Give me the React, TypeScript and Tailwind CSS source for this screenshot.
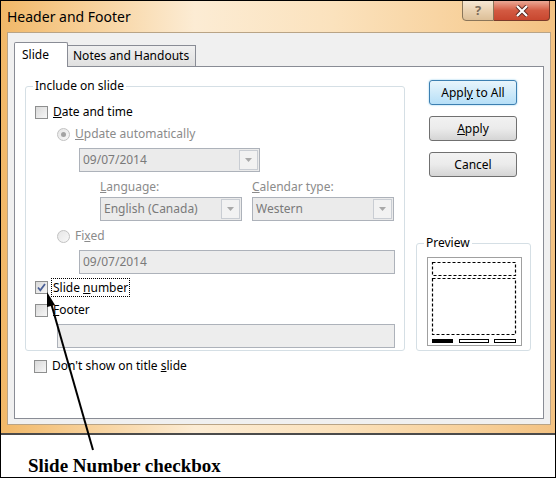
import React from "react";

// petites briques façon Windows 7
const Check = ({ checked = false }: { checked?: boolean }) => (
  <span className="w-[13px] h-[13px] shrink-0 border border-[#8e8f8f] bg-gradient-to-br from-[#d9d9d9] to-[#f7f7f7] flex items-center justify-center">
    {checked && (
      <svg width="11" height="11" viewBox="0 0 11 11">
        <path d="M2 5.5 L4.3 8.3 L9 2" fill="none" stroke="#4a5f97" strokeWidth="1.8" />
      </svg>
    )}
  </span>
);

const Radio = ({ on = false }: { on?: boolean }) => (
  <span className="w-[13px] h-[13px] shrink-0 rounded-full border border-[#c2c2c2] bg-gradient-to-br from-[#e6e6e6] to-[#f8f8f8] flex items-center justify-center">
    {on && <span className="w-[5px] h-[5px] rounded-full bg-[#a3a3a3]" />}
  </span>
);

const Combo = ({ text, w }: { text: string; w: string }) => (
  <div className={`${w} h-[24px] flex border border-[#adb2ba] bg-[#ebebeb]`}>
    <span className="flex-1 pl-[3px] leading-[22px] text-[#7a7a7a]">{text}</span>
    <span className="w-[19px] my-[1px] mr-[1px] border border-[#c9cdd3] bg-[#f2f2f2] flex items-center justify-center">
      <svg width="7" height="4" viewBox="0 0 7 4">
        <path d="M0 0 H7 L3.5 4 Z" fill="#a9a9a9" />
      </svg>
    </span>
  </div>
);

const Box = ({ text = "", w }: { text?: string; w: string }) => (
  <div className={`${w} h-[24px] border border-[#adb2ba] bg-[#ededed] pl-[3px] leading-[22px] text-[#7a7a7a]`}>
    {text}
  </div>
);

const Btn = ({ children, main = false }: { children: React.ReactNode; main?: boolean }) => (
  <div
    className={`w-[88px] h-[25px] rounded-[3px] border flex items-center justify-center text-black ${
      main
        ? "border-[#3c7fb1] bg-gradient-to-b from-[#e8f5fc] to-[#b6dff7] shadow-[0_0_2px_#7fc4ea]"
        : "border-[#707070] bg-gradient-to-b from-[#f2f2f2] via-[#ebebeb] to-[#d5d5d5]"
    }`}
  >
    {children}
  </div>
);

const App = () => {
  return (
    <div className="relative w-[556px] h-[478px] overflow-hidden border border-black bg-white font-['Noto_Sans',sans-serif] text-[12px] text-black">
      {/* Fenêtre */}
      <div className="h-[434px] pl-[6px] pr-[4px] pb-[8px] border-b-2 border-[#4b4b4b] bg-[linear-gradient(90deg,#f1b868_0%,#f6cb8e_12%,#fcecd4_35%,#fbe2bd_60%,#f7d09a_85%,#f3c282_100%)]">
        {/* barre de titre */}
        <div className="h-[31px] flex items-start justify-between">
          <span className="pt-[5px] text-[14px] text-black">Header and Footer</span>
          <div className="flex -mt-px mr-[1px]">
            <div className="w-[32px] h-[21px] rounded-bl-[4px] border border-[#8a7559] bg-gradient-to-b from-[#f6e7d4] via-[#ead2b2] to-[#dcbf98] flex items-center justify-center text-[13px] font-bold text-[#7a6a5a]">
              ?
            </div>
            <div className="w-[56px] h-[21px] rounded-br-[4px] border border-l-0 border-[#7a3a2a] bg-gradient-to-b from-[#eaa895] via-[#d35a42] to-[#c8472f] flex items-center justify-center">
              <svg width="14" height="12" viewBox="0 0 14 12">
                <path d="M2 1 L12 11 M12 1 L2 11" stroke="#5a2a22" strokeWidth="4" />
                <path d="M2 1 L12 11 M12 1 L2 11" stroke="#ffffff" strokeWidth="2.2" />
              </svg>
            </div>
          </div>
        </div>

        {/* zone client */}
        <div className="h-[393px] border border-[#b9a486] bg-[#f0f0f0] pt-[9px] px-[6px] pb-[5px]">
          {/* onglets */}
          <div className="h-[24px] flex items-end">
            <div className="relative z-10 -mb-px h-[25px] w-[54px] rounded-t-[2px] border border-b-0 border-[#898c95] bg-white pl-[7px] pt-[3px]">
              Slide
            </div>
            <div className="h-[21px] w-[129px] -ml-px border border-b-0 border-[#898c95] bg-gradient-to-b from-[#f0f0f0] to-[#e0e0e0] pl-[5px] pt-[1px]">
              Notes and Handouts
            </div>
          </div>

          {/* panneau */}
          <div className="h-[353px] border border-[#898c95] bg-white flex pt-[19px] pl-[10px]">
            {/* colonne gauche */}
            <div className="flex flex-col">
              <div className="w-[380px] h-[265px] rounded-[3px] border border-[#d5dfe5] flex flex-col">
                <span className="-mt-[9px] ml-[7px] h-[16px] self-start bg-white px-[2px] leading-[16px]">
                  Include on slide
                </span>

                <div className="mt-[10px] ml-[9px] h-[16px] flex items-center gap-[5px]">
                  <Check />
                  <span>
                    <u>D</u>ate and time
                  </span>
                </div>

                <div className="mt-[6px] ml-[31px] h-[16px] flex items-center gap-[5px] text-[#8b8b8b]">
                  <Radio on />
                  <span>
                    <u>U</u>pdate automatically
                  </span>
                </div>

                <div className="mt-[6px] ml-[53px]">
                  <Combo text="09/07/2014" w="w-[181px]" />
                </div>

                <div className="mt-[6px] ml-[74px] h-[16px] flex text-[#8b8b8b]">
                  <span className="w-[152px]">
                    <u>L</u>anguage:
                  </span>
                  <span>
                    <u>C</u>alendar type:
                  </span>
                </div>

                <div className="mt-[3px] ml-[74px] flex gap-[10px]">
                  <Combo text="English (Canada)" w="w-[142px]" />
                  <Combo text="Western" w="w-[142px]" />
                </div>

                <div className="mt-[7px] ml-[31px] h-[16px] flex items-center gap-[5px] text-[#8b8b8b]">
                  <Radio />
                  <span>
                    Fi<u>x</u>ed
                  </span>
                </div>

                <div className="mt-[6px] ml-[53px]">
                  <Box text="09/07/2014" w="w-[316px]" />
                </div>

                <div className="mt-[4px] ml-[9px] h-[19px] flex items-center gap-[3px]">
                  <Check checked />
                  <span className="h-[19px] border border-dotted border-black px-[1px] leading-[17px]">
                    Slide <u>n</u>umber
                  </span>
                </div>

                <div className="mt-[5px] ml-[9px] h-[16px] flex items-center gap-[5px]">
                  <Check />
                  <span>
                    <u>F</u>ooter
                  </span>
                </div>

                <div className="mt-[6px] ml-[31px]">
                  <Box w="w-[338px]" />
                </div>
              </div>

              <div className="mt-[7px] ml-[9px] h-[16px] flex items-center gap-[5px]">
                <Check />
                <span>
                  Don't show on title <u>s</u>lide
                </span>
              </div>
            </div>

            {/* colonne droite */}
            <div className="ml-[11px] flex flex-col">
              <div className="ml-[13px] -mt-[6px] flex flex-col gap-[11px]">
                <Btn main>
                  Appl<u>y</u>&nbsp;to All
                </Btn>
                <Btn>
                  <u>A</u>pply
                </Btn>
                <Btn>Cancel</Btn>
              </div>

              <div className="mt-[66px] w-[115px] h-[108px] rounded-[3px] border border-[#d5dfe5] flex flex-col">
                <span className="-mt-[9px] ml-[7px] h-[16px] self-start bg-white px-[2px] leading-[16px]">
                  Preview
                </span>
                <div className="mt-[6px] ml-[10px] w-[95px] h-[89px] border border-[#a0a0a0] bg-white">
                  <svg width="93" height="87" viewBox="0 0 93 87">
                    <rect x="4.5" y="4.5" width="83" height="13" fill="none" stroke="#000" strokeWidth="1.2" strokeDasharray="3 2" />
                    <rect x="4.5" y="20.5" width="83" height="56" fill="none" stroke="#000" strokeWidth="1.2" strokeDasharray="3 2" />
                    <rect x="4" y="81" width="21" height="4" fill="#000" />
                    <rect x="31.5" y="81.5" width="29" height="3" fill="none" stroke="#000" />
                    <rect x="66.5" y="81.5" width="21" height="3" fill="none" stroke="#000" />
                  </svg>
                </div>
              </div>
            </div>
          </div>
        </div>
      </div>

      {/* légende */}
      <div className="h-[42px] flex items-center pl-[27px] pt-[20px] font-['Liberation_Serif',serif] text-[19px] font-bold">
        Slide Number checkbox
      </div>

      {/* flèche */}
      <svg className="absolute left-0 top-0 pointer-events-none" width="556" height="478">
        <line x1="92" y1="449" x2="50" y2="302" stroke="#000" strokeWidth="2" />
        <polygon points="46,291 54,304 46,306" fill="#000" />
      </svg>
    </div>
  );
};

export default App;
